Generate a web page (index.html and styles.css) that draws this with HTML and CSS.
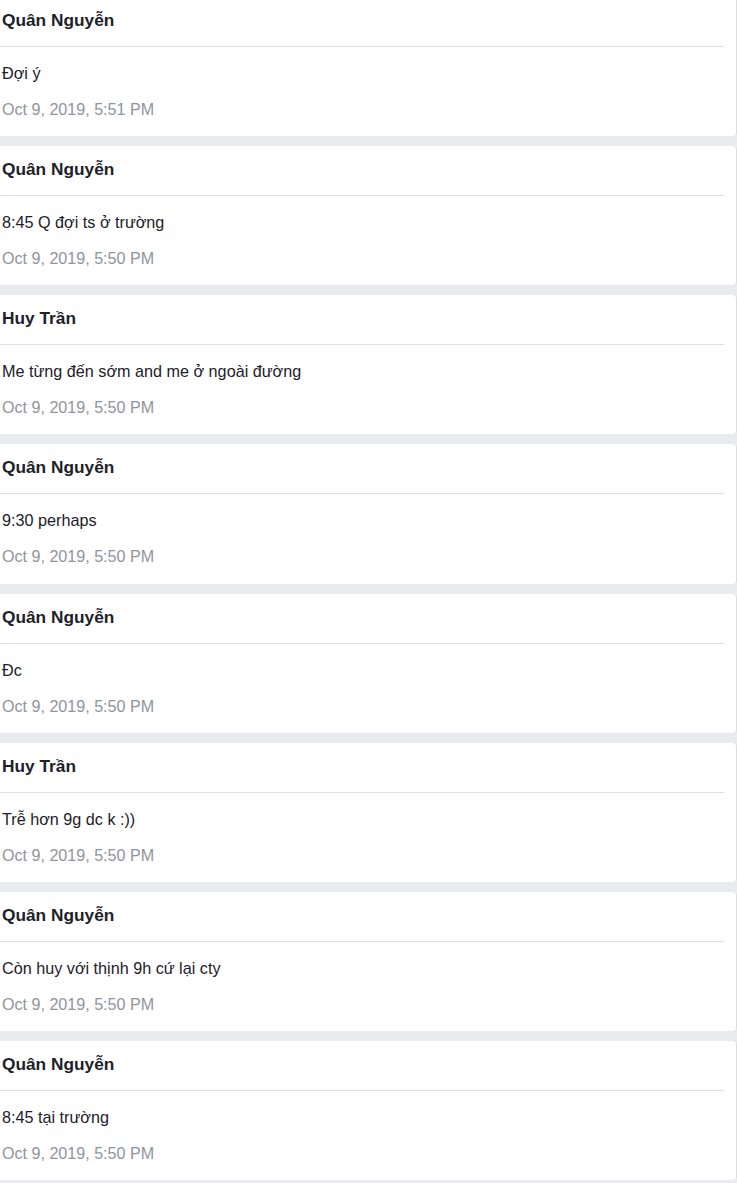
FILE: index.html
```html
<!DOCTYPE html>
<html lang="vi">
<head>
<meta charset="utf-8">
<title>Messages</title>
<link rel="stylesheet" href="styles.css">
</head>
<body>
<div class="list">
  <div class="card">
    <div class="name">Quân Nguyễn</div>
    <div class="msg">Đợi ý</div>
    <div class="date">Oct 9, 2019, 5:51 PM</div>
  </div>
  <div class="card">
    <div class="name">Quân Nguyễn</div>
    <div class="msg">8:45 Q đợi ts ở trường</div>
    <div class="date">Oct 9, 2019, 5:50 PM</div>
  </div>
  <div class="card">
    <div class="name">Huy Trần</div>
    <div class="msg">Me từng đến sớm and me ở ngoài đường</div>
    <div class="date">Oct 9, 2019, 5:50 PM</div>
  </div>
  <div class="card">
    <div class="name">Quân Nguyễn</div>
    <div class="msg">9:30 perhaps</div>
    <div class="date">Oct 9, 2019, 5:50 PM</div>
  </div>
  <div class="card">
    <div class="name">Quân Nguyễn</div>
    <div class="msg">Đc</div>
    <div class="date">Oct 9, 2019, 5:50 PM</div>
  </div>
  <div class="card">
    <div class="name">Huy Trần</div>
    <div class="msg">Trễ hơn 9g dc k :))</div>
    <div class="date">Oct 9, 2019, 5:50 PM</div>
  </div>
  <div class="card">
    <div class="name">Quân Nguyễn</div>
    <div class="msg">Còn huy với thịnh 9h cứ lại cty</div>
    <div class="date">Oct 9, 2019, 5:50 PM</div>
  </div>
  <div class="card">
    <div class="name">Quân Nguyễn</div>
    <div class="msg">8:45 tại trường</div>
    <div class="date">Oct 9, 2019, 5:50 PM</div>
  </div>
</div>
</body>
</html>
```
FILE: styles.css
```css
html, body {
  margin: 0;
  padding: 0;
  background: #e9ebee;
  font-family: "Liberation Sans", Arial, sans-serif;
  color: #1d2129;
}
.list {
  margin-top: -3px;
  display: flex;
  flex-direction: column;
  gap: 10px;
}
.card {
  background: #fff;
  border-right: 1px solid #dadde1;
  border-radius: 0 4px 4px 0;
  padding: 13px 0 18.14px 2px;
}
.name {
  font-size: 17.3px;
  font-weight: bold;
  line-height: 20px;
  padding-bottom: 16px;
  margin-right: 12px;
  margin-left: -2px;
  padding-left: 2px;
  border-bottom: 1px solid #dddfe2;
}
.msg {
  font-size: 16.2px;
  line-height: 18px;
  margin-top: 17px;
}
.date {
  font-size: 16.1px;
  line-height: 18px;
  margin-top: 18px;
  color: #90949c;
}
```
